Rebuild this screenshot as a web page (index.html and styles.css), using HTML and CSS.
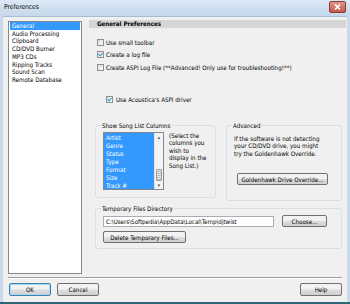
FILE: index.html
```html
<!DOCTYPE html>
<html>

<head>
    <meta charset="UTF-8">
    <title>Preferences</title>
    <link rel="stylesheet" href="styles.css">
</head>

<body>
    <div class="window">
        <div class="titlebar">
            <span class="title">Preferences</span>
            <span class="close">
                <svg width="7" height="6" viewBox="0 0 7 6">
                    <path d="M1 0.5 L6 5.5 M6 0.5 L1 5.5" stroke="#fff" stroke-width="1.6" />
                </svg>
            </span>
        </div>

        <div class="client">
            <div class="main">
                <ul class="nav">
                    <li class="selected">General</li>
                    <li>Audio Processing</li>
                    <li>Clipboard</li>
                    <li>CD/DVD Burner</li>
                    <li>MP3 CDs</li>
                    <li>Ripping Tracks</li>
                    <li>Sound Scan</li>
                    <li>Remote Database</li>
                </ul>

                <div class="panel">
                    <div class="panel-head">General Preferences</div>

                    <div class="checks">
                        <div class="check"><span class="box"></span>Use small toolbar</div>
                        <div class="check"><span class="box checked"></span>Create a log file</div>
                        <div class="check"><span class="box"></span>Create ASPI Log File (**Advanced! Only use for troubleshooting!**)</div>
                    </div>

                    <div class="check aspi"><span class="box checked"></span>Use Acoustica's ASPI driver</div>

                    <div class="groups">
                        <fieldset class="group columns">
                            <legend>Show Song List Columns</legend>
                            <div class="listbox">
                                <ul class="list-items">
                                    <li>Artist</li>
                                    <li>Genre</li>
                                    <li>Status</li>
                                    <li>Type</li>
                                    <li>Format</li>
                                    <li>Size</li>
                                    <li>Track #</li>
                                </ul>
                                <div class="scrollbar">
                                    <span class="arrow">&#9652;</span>
                                    <span class="track"><span class="thumb"></span></span>
                                    <span class="arrow">&#9662;</span>
                                </div>
                            </div>
                            <p class="hint">(Select the<br>columns you<br>wish to<br>display in the<br>Song List.)</p>
                        </fieldset>

                        <fieldset class="group advanced">
                            <legend>Advanced</legend>
                            <p class="hint">If the software is not detecting<br>your CD/DVD drive, you might<br>try the Goldenhawk Override.</p>
                            <button class="btn override">Goldenhawk Drive Override...</button>
                        </fieldset>
                    </div>

                    <fieldset class="group temp">
                        <legend>Temporary Files Directory</legend>
                        <div class="path-row">
                            <input class="path" type="text" value="C:\Users\Softpedia\AppData\Local\Temp\djtwist">
                            <button class="btn choose">Choose...</button>
                        </div>
                        <button class="btn delete">Delete Temporary Files...</button>
                    </fieldset>
                </div>
            </div>

            <div class="separator"></div>

            <div class="footer">
                <button class="btn default">OK</button>
                <button class="btn">Cancel</button>
                <span class="spacer"></span>
                <button class="btn">Help</button>
            </div>
        </div>
    </div>
</body>

</html>
```

FILE: styles.css
```css
/* Preferences dialog */
body {
    margin: 0;
    font-family: "DejaVu Sans Condensed", "Liberation Sans", Arial, sans-serif;
    font-size: 6.2px;
    color: #000;
    background: #2f6677;
}

.window {
    width: 350px;
    height: 304px;
    box-sizing: border-box;
    display: flex;
    flex-direction: column;
    background: #c9daec;
    border-bottom: 2px solid #2f6677;
}

.titlebar {
    height: 16px;
    display: flex;
    align-items: center;
    padding: 0 4px 0 4px;
    background: linear-gradient(#dbe7f4, #c6d8ec);
}

.title {
    flex: 1;
    font-size: 6.6px;
    color: #000;
    margin-top: -2px;
}

.close {
    width: 15px;
    height: 10px;
    margin-top: -3px;
    display: flex;
    align-items: center;
    justify-content: center;
    border: 1px solid #8e3a33;
    border-radius: 2px;
    background: linear-gradient(#e0988c, #c45648);
}

.client {
    flex: 1;
    margin: 0 3px 0 3px;
    background: #f0f0f0;
    display: flex;
    flex-direction: column;
    border-top: 1px solid #a7bdd3;
}

.main {
    display: flex;
    padding: 4px 0 0 5px;
}

.nav {
    list-style: none;
    margin: 0;
    padding: 0 1px;
    width: 70px;
    height: 251px;
    background: #fff;
    border: 1px solid #828790;
}

.nav li {
    line-height: 7.7px;
    padding-left: 2px;
}

.nav li.selected {
    background: #3399ff;
    color: #fff;
}

.panel {
    width: 257px;
    margin-left: 7px;
    margin-top: -1px;
}

.panel-head {
    height: 8px;
    line-height: 8px;
    background: #d6d6d6;
    font-weight: bold;
    padding-left: 8px;
}

.checks {
    margin-top: 8px;
    padding-left: 8px;
}

.check {
    display: flex;
    align-items: center;
    height: 12.5px;
}

.box {
    width: 5px;
    height: 5px;
    margin-right: 2px;
    border: 1px solid #8f8f8f;
    background: linear-gradient(135deg, #dcdcdc, #fbfbfb);
    position: relative;
}

.box.checked::after {
    content: "";
    position: absolute;
    left: 1px;
    top: 0;
    width: 2px;
    height: 3px;
    border: solid #21a1c4;
    border-width: 0 1px 1px 0;
    transform: rotate(40deg);
}

.aspi {
    margin-top: 20px;
    padding-left: 17px;
}

.aspi .box {
    margin-right: 3px;
}

.groups {
    display: flex;
    gap: 10px;
    margin-top: 16px;
    padding-left: 6px;
}

.group {
    margin: 0;
    padding: 0 6px 5px 7px;
    border: 1px solid #d5dfe5;
    border-radius: 3px;
}

.group legend {
    padding: 0 1px;
    margin-left: -2px;
    line-height: 7px;
}

.columns {
    width: 106px;
    height: 66px;
    display: flex;
    gap: 5px;
    padding-top: 3px;
}

.listbox {
    width: 59px;
    height: 56px;
    border: 1px solid #828790;
    background: #3399ff;
    display: flex;
}

.list-items {
    flex: 1;
    list-style: none;
    margin: 0;
    padding: 1px 0 0 2px;
    color: #fff;
    overflow: hidden;
}

.list-items li {
    line-height: 8px;
}

.scrollbar {
    width: 8px;
    display: flex;
    flex-direction: column;
    background: #f4f4f4;
    border-left: 1px solid #e3e3e3;
}

.arrow {
    height: 8px;
    line-height: 8px;
    text-align: center;
    font-size: 5px;
    color: #444;
}

.track {
    flex: 1;
    display: flex;
    flex-direction: column;
    justify-content: flex-end;
    padding: 0 1px;
}

.thumb {
    height: 10px;
    border: 1px solid #9a9a9a;
    border-radius: 1px;
    background: repeating-linear-gradient(#e8e8e8 0 1px, #bdbdbd 1px 2px);
}

.hint {
    margin: 0;
    line-height: 7.4px;
}

.columns .hint {
    margin-top: 0;
}

.advanced {
    width: 101px;
    height: 66px;
    padding-top: 6px;
}

.btn {
    font-family: inherit;
    font-size: 6.2px;
    height: 12px;
    padding: 0 2px;
    white-space: nowrap;
    border: 1px solid #707070;
    border-radius: 2px;
    background: linear-gradient(#f2f2f2 0 45%, #dddddd 55%, #cfcfcf);
    color: #000;
}

.override {
    display: block;
    width: 91px;
    margin: 16px 0 0 3px;
}

.temp {
    margin: 4px 0 0 6px;
    width: 231px;
    padding: 3px 7px 5px 7px;
}

.path-row {
    display: flex;
    align-items: center;
}

.path {
    width: 171px;
    height: 11px;
    box-sizing: border-box;
    padding: 0 2px;
    border: 1px solid #abadb3;
    font-family: inherit;
    font-size: 6.2px;
}

.choose {
    width: 45px;
    margin-left: 8px;
}

.delete {
    margin-top: 4px;
    width: 83px;
}

.separator {
    margin: 3px 5px 0 5px;
    border-top: 1px solid #a0a0a0;
    border-bottom: 1px solid #fff;
}

.footer {
    display: flex;
    gap: 6px;
    padding: 4px 5px 0 6px;
}

.footer .btn {
    width: 42px;
    height: 13px;
}

.footer .default {
    border-color: #3c7fb1;
    box-shadow: inset 0 0 0 1px #a7d8f2;
}

.spacer {
    flex: 1;
}
```
